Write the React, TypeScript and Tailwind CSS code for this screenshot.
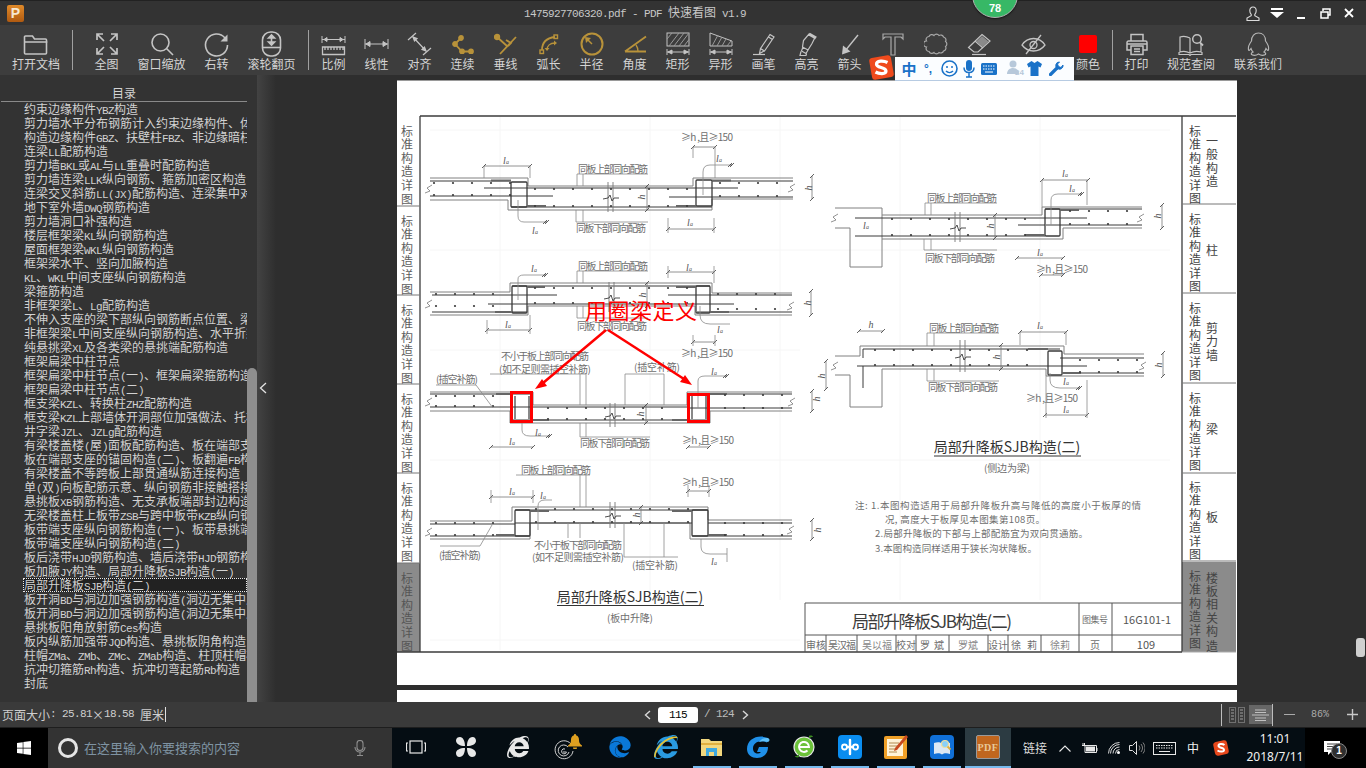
import type { ReactNode } from "react";
import { FaEdge, FaInternetExplorer, FaWindows } from "react-icons/fa";

const GOLD = "#b8923a";
const LINE = "#c4c4c4";

/* half-width runs of the old UI font: latin is squeezed so each char is 6px wide */
function Mixed({ text }: { text: string }) {
  return (
    <>
      {text.split(/([\x20-\x7e]+)/).map((part, i) =>
        /^[\x20-\x7e]+$/.test(part) ? (
          <span key={i} className="font-['Liberation_Mono',monospace] text-[11px] tracking-[-0.6px] whitespace-pre">
            {part}
          </span>
        ) : (
          <span key={i}>{part}</span>
        ),
      )}
    </>
  );
}

const TOC = [
  "约束边缘构件YBZ构造",
  "剪力墙水平分布钢筋计入约束边缘构件、体积配箍率",
  "构造边缘构件GBZ、扶壁柱FBZ、非边缘暗柱构造",
  "连梁LL配筋构造",
  "剪力墙BKL或AL与LL重叠时配筋构造",
  "剪力墙连梁LLK纵向钢筋、箍筋加密区构造",
  "连梁交叉斜筋LL(JX)配筋构造、连梁集中对角斜筋",
  "地下室外墙DWQ钢筋构造",
  "剪力墙洞口补强构造",
  "楼层框架梁KL纵向钢筋构造",
  "屋面框架梁WKL纵向钢筋构造",
  "框架梁水平、竖向加腋构造",
  "KL、WKL中间支座纵向钢筋构造",
  "梁箍筋构造",
  "非框架梁L、Lg配筋构造",
  "不伸入支座的梁下部纵向钢筋断点位置、梁侧构造",
  "非框架梁L中间支座纵向钢筋构造、水平折梁钢筋",
  "纯悬挑梁XL及各类梁的悬挑端配筋构造",
  "框架扁梁中柱节点",
  "框架扁梁中柱节点(一)、框架扁梁箍筋构造",
  "框架扁梁中柱节点(二)",
  "框支梁KZL、转换柱ZHZ配筋构造",
  "框支梁KZL上部墙体开洞部位加强做法、托柱转换",
  "井字梁JZL、JZLg配筋构造",
  "有梁楼盖楼(屋)面板配筋构造、板在端部支座构造",
  "板在端部支座的锚固构造(二)、板翻遍FB构造",
  "有梁楼盖不等跨板上部贯通纵筋连接构造",
  "单(双)向板配筋示意、纵向钢筋非接触搭接构造",
  "悬挑板XB钢筋构造、无支承板端部封边构造",
  "无梁楼盖柱上板带ZSB与跨中板带KZB纵向钢筋构造",
  "板带端支座纵向钢筋构造(一)、板带悬挑端构造",
  "板带端支座纵向钢筋构造(二)",
  "板后浇带HJD钢筋构造、墙后浇带HJD钢筋构造",
  "板加腋JY构造、局部升降板SJB构造(一)",
  "局部升降板SJB构造(二)",
  "板开洞BD与洞边加强钢筋构造(洞边无集中反筋",
  "板开洞BD与洞边加强钢筋构造(洞边无集中反筋",
  "悬挑板阳角放射筋Ces构造",
  "板内纵筋加强带JQD构造、悬挑板阴角构造",
  "柱帽ZMa、ZMb、ZMc、ZMab构造、柱顶柱帽构造",
  "抗冲切箍筋Rh构造、抗冲切弯起筋Rb构造",
  "封底",
];

/* ---------- toolbar icons ---------- */
const Folder = (
  <svg width="26" height="21" viewBox="0 0 26 21" fill="none" stroke={LINE} strokeWidth="1.6">
    <path d="M1.5 19V3a1 1 0 0 1 1-1h7l2 3h11a1 1 0 0 1 1 1v13a1 1 0 0 1-1 1h-20a1 1 0 0 1-1-1zM1.5 8h23" />
  </svg>
);
const FitAll = (
  <svg width="24" height="24" viewBox="0 0 24 24" fill="none" stroke={LINE} strokeWidth="1.7">
    <path d="m15 15 7 7M15 9l7-7M22 16v6h-6M22 8V2h-6M2 16v6h6M2 22l7-7M2 8V2h6M2 2l7 7" />
  </svg>
);
const Zoom = (
  <svg width="24" height="24" viewBox="0 0 24 24" fill="none" stroke={LINE} strokeWidth="1.6">
    <circle cx="10.5" cy="10.5" r="8.5" />
    <path d="m16.5 16.5 6.5 6.5" />
  </svg>
);
const Rotate = (
  <svg width="25" height="25" viewBox="0 0 25 25" fill="none" stroke={LINE} strokeWidth="1.6">
    <path d="M21 6A11 11 0 1 0 23.5 13" />
    <path d="M23.5 2.500v7h-7z" fill={LINE} stroke="none" />
  </svg>
);
const Wheel = (
  <svg width="21" height="26" viewBox="0 0 21 26" fill="none" stroke={LINE} strokeWidth="1.6">
    <rect x="1.500" y="1" width="18" height="24" rx="8" />
    <path d="M1.500 16.500h18" />
    <path d="M10.500 5v8" />
    <path d="m7.500 7 3-3 3 3zM7.500 11l3 3 3-3z" fill={LINE} />
  </svg>
);
const Ratio = (
  <svg width="25" height="21" viewBox="0 0 25 21" fill="none" stroke={LINE} strokeWidth="1" className="mt-[2px]">
    <path d="M1 1v7M24 1v7M1 4.500h23" />
    <path d="m3 4.500 3-2v4zM22 4.500l-3-2v4z" fill={LINE} />
    <path d="M1.500 12h22v7.500h-22zM4 12v3M7 12v3M10 12v3M13 12v3M16 12v3M19 12v3M22 12v3" strokeWidth="1.300" />
  </svg>
);
const Linear = (
  <svg width="25" height="12" viewBox="0 0 25 12" fill="none" stroke={LINE} strokeWidth="1">
    <path d="M1 1v10M24 1v10M1 6h23" />
    <path d="m2 6 4-2.500v5zM23 6l-4-2.500v5z" fill={LINE} />
  </svg>
);
const Align = (
  <svg width="25" height="24" viewBox="0 0 25 24" fill="none" stroke={LINE} strokeWidth="1.200">
    <path d="M1 8 9 1M16 23l8-7M6 5l13 14" />
    <path d="m6 5 4 1.500-2.500 2.500zM19 19l-4-1.500 2.500-2.500z" fill={LINE} />
  </svg>
);
const Chain = (
  <svg width="22" height="19" viewBox="0 0 22 19" fill={GOLD} stroke={GOLD} strokeWidth="1.800">
    <path d="M9 3 3 9l7 7.500h9" fill="none" />
    <circle cx="9" cy="3" r="2" />
    <circle cx="3" cy="9" r="2" />
    <circle cx="10" cy="16.500" r="2" />
    <circle cx="19" cy="16.500" r="2" />
  </svg>
);
const Perp = (
  <svg width="24" height="22" viewBox="0 0 24 22" fill="none" stroke={GOLD} strokeWidth="1.800">
    <path d="M3 4 13 13M22 4 6 21M12 7l5 3-3 3" />
    <circle cx="3" cy="4" r="2.300" fill={GOLD} />
  </svg>
);
const Arc = (
  <svg width="20" height="21" viewBox="0 0 20 21" fill="none" stroke={GOLD} strokeWidth="1.400">
    <path d="M3 16C3 8 8 4 16 3" strokeWidth="1.800" />
    <path d="M8 16c0-4 3-7 8-7" />
    <path d="m15 6.500 3 2.500-3 2.500zM5.500 14l2.500 3 2.500-3z" fill={GOLD} stroke="none" />
    <rect x="1" y="16" width="3.500" height="3.500" />
    <rect x="15" y="1" width="3.500" height="3.500" />
  </svg>
);
const Radius = (
  <svg width="24" height="24" viewBox="0 0 24 24" fill="none" stroke={GOLD} strokeWidth="2">
    <circle cx="12" cy="12" r="10.500" />
    <path d="M12 12 6.500 6.500" strokeWidth="1.500" />
    <path d="m5 5 6 1-5 5z" fill={GOLD} stroke="none" />
  </svg>
);
const Angle = (
  <svg width="24" height="18" viewBox="0 0 24 18" fill="none" stroke={GOLD} strokeWidth="1.800">
    <path d="M2 16.500h21M2 16.500 23 1.500" />
    <path d="M13 10c1.500 2 2 4 2 6.500" strokeWidth="1.300" />
  </svg>
);
const Rect = (
  <svg width="24" height="24" viewBox="0 0 24 24" fill="none" stroke={LINE} strokeWidth="1">
    <rect x="1" y="1" width="22" height="13" />
    <path d="m3 14 10-13M8 14 18 1M13 14 23 1M1 7l5-6M18 14l5-6.500" stroke="#9a9a9a" />
    <path d="M1 17v6M23 17v6M1 20h22" />
    <path d="m2 20 4-2v4zM22 20l-4-2v4z" fill={LINE} />
  </svg>
);
const Shape = (
  <svg width="24" height="24" viewBox="0 0 24 24" fill="none" stroke={LINE} strokeWidth="1">
    <path d="M1 1 23 9v5H1z" />
    <path d="m3 14 6-11M8 14l5-9M13 14l4-7M18 14l4-5" stroke="#9a9a9a" />
    <path d="M1 17v6M23 17v6M1 20h22" />
    <path d="m2 20 4-2v4zM22 20l-4-2v4z" fill={LINE} />
  </svg>
);
const Pen = (
  <svg width="24" height="23" viewBox="0 0 24 23" fill="none" stroke={LINE} strokeWidth="1.200">
    <path d="m18 1.500 4 2.500L12.500 18l-4-2.500zM8.500 15.500l-1 5 4.500-2.500M16.500 4l4 2.500" />
    <path d="M1 21.500h12" />
  </svg>
);
const Marker = (
  <svg width="20" height="25" viewBox="0 0 20 25" fill="none" stroke={LINE} strokeWidth="1.200">
    <path d="m12 2 6 3.500-3 6L11 18l-5.500-3 1-6.500zM13 1.500l6 3.500-1 1.500-6-3.500zM6 15l-1.500 4 4.500 2.500L11 18" />
    <path d="M4 19.500 3 23.500h6l.5-2" />
  </svg>
);
const Arrow = (
  <svg width="18" height="21" viewBox="0 0 18 21" fill="none" stroke={LINE} strokeWidth="1.400">
    <path d="M17 1 4 17" />
    <path d="m1 20.500 1-9 7.500 6z" fill={LINE} stroke="none" />
  </svg>
);
const TextTool = (
  <svg width="22" height="23" viewBox="0 0 22 23" fill="none" stroke="#a8a8a8" strokeWidth="1.200">
    <path d="M1 1h20v5l-2-2h-6v18H9V4H3L1 6z" />
  </svg>
);
const Cloud = (
  <svg width="24" height="23" viewBox="0 0 24 23" fill="none" stroke="#a8a8a8" strokeWidth="1.200">
    <path d="M5 3.500a3 3 0 0 1 5-1 3 3 0 0 1 5 0 3 3 0 0 1 4.500 1.500 3 3 0 0 1 2 4.500 3 3 0 0 1 0 5 3 3 0 0 1-2 4.500 3 3 0 0 1-4.500 1.500 3 3 0 0 1-5 0 3 3 0 0 1-5-1 3 3 0 0 1-2.500-4.500 3 3 0 0 1 0-6A3 3 0 0 1 5 3.500z" />
  </svg>
);
const Eraser = (
  <svg width="24" height="23" viewBox="0 0 24 23" fill="none" stroke={LINE} strokeWidth="1.200">
    <path d="M15 1.500 23 8 11 19H7L1.500 14.500z" />
    <path d="m8 8 8 7" />
    <path d="M15 3 21.500 8.500 15.500 14 9 8.500z" fill="#8a8a8a" stroke="none" />
    <path d="M5 21.500h14" />
  </svg>
);
const EyeOff = (
  <svg width="25" height="21" viewBox="0 0 25 21" fill="none" stroke={LINE} strokeWidth="1.300">
    <path d="M1 11c3-4.500 7-6.500 11.500-6.500S21 6.500 24 11c-3 4-7 6-11.500 6S4 15 1 11z" />
    <circle cx="12.500" cy="11" r="3.500" />
    <path d="M20 1 5 20" />
  </svg>
);
const Printer = (
  <svg width="22" height="23" viewBox="0 0 22 23" fill="none" stroke={LINE} strokeWidth="1.500">
    <path d="M5 8V1.500h12V8M5 17H1V9.500A1.500 1.500 0 0 1 2.500 8h17A1.500 1.500 0 0 1 21 9.500V17h-4" />
    <path d="M5 13h12v8.500H5zM8 16h6M8 18.500h6M1 11h20" />
  </svg>
);
const Book = (
  <svg width="26" height="23" viewBox="0 0 26 23" fill="none" stroke={LINE} strokeWidth="1.200">
    <path d="M12 5C9 3.500 5 3 2 4v15c3-1 7-.5 10 1 3-1.500 7-2 11-1V11M12 5v15M1 19v2.500h10l1 1 1-1h11V19" />
    <circle cx="19" cy="6" r="4.300" strokeWidth="1.500" />
    <path d="m22 9.500 3 3" strokeWidth="1.800" />
  </svg>
);
const QQ = (
  <svg width="23" height="25" viewBox="0 0 23 25" fill="none" stroke="#b4b4b4" strokeWidth="1.200">
    <path d="M4.500 9c0-5 3-8 7-8s7 3 7 8c2 2.500 3.500 6 3 9-.2 1-1.500 0-2.500-1.500-.5 1.500-1 2.500-2 3.500 1.500.7 2 1.500 1.500 2.500-2 1-5 .8-7-.5-2 1.300-5 1.500-7 .5-.5-1 0-1.800 1.500-2.500-1-1-1.500-2-2-3.500-1 1.500-2.300 2.500-2.500 1.500-.5-3 1-6.500 3-9z" />
  </svg>
);
const Swatch = <span className="block w-[18px] h-[18px] rounded-[2px] bg-[#ff0000]" />;

type Tool = { label?: string; icon: ReactNode; w: string };

const GROUP_VIEW: Tool[] = [
  { label: "全图", icon: FitAll, w: "w-[55px]" },
  { label: "窗口缩放", icon: Zoom, w: "w-[55px]" },
  { label: "右转", icon: Rotate, w: "w-[55px]" },
  { label: "滚轮翻页", icon: Wheel, w: "w-[55px]" },
];
const GROUP_MEASURE: Tool[] = [
  { label: "比例", icon: Ratio, w: "w-[43px]" },
  { label: "线性", icon: Linear, w: "w-[43px]" },
  { label: "对齐", icon: Align, w: "w-[43px]" },
  { label: "连续", icon: Chain, w: "w-[43px]" },
  { label: "垂线", icon: Perp, w: "w-[43px]" },
  { label: "弧长", icon: Arc, w: "w-[43px]" },
  { label: "半径", icon: Radius, w: "w-[43px]" },
  { label: "角度", icon: Angle, w: "w-[43px]" },
  { label: "矩形", icon: Rect, w: "w-[43px]" },
  { label: "异形", icon: Shape, w: "w-[43px]" },
  { label: "画笔", icon: Pen, w: "w-[43px]" },
  { label: "高亮", icon: Marker, w: "w-[43px]" },
  { label: "箭头", icon: Arrow, w: "w-[43px]" },
  { icon: TextTool, w: "w-[43px]" },
  { icon: Cloud, w: "w-[43px]" },
  { icon: Eraser, w: "w-[43px]" },
];

function ToolItem({ tool }: { tool: Tool }) {
  return (
    <div className={`${tool.w} shrink-0 flex flex-col items-center`}>
      <div className="h-[32px] w-full flex items-center justify-center pt-[6px]">{tool.icon}</div>
      <div className="h-[14px] text-[12px] leading-[14px] text-[#d4d4d4] whitespace-nowrap">{tool.label}</div>
    </div>
  );
}

const Sep = () => <div className="w-px h-[40px] self-center bg-[#a0a0a0] shrink-0" />;

function Toolbar() {
  return (
    <div className="h-[50px] bg-[#3d3d3d] flex items-start shrink-0">
      <ToolItem tool={{ label: "打开文档", icon: Folder, w: "w-[72px]" }} />
      <Sep />
      <div className="w-[6px] shrink-0" />
      {GROUP_VIEW.map((t) => (
        <ToolItem key={t.label} tool={t} />
      ))}
      <div className="w-[9px] shrink-0" />
      <Sep />
      <div className="w-[3px] shrink-0" />
      {GROUP_MEASURE.map((t, i) => (
        <ToolItem key={i} tool={t} />
      ))}
      <div className="w-[5px] shrink-0" />
      <ToolItem tool={{ icon: EyeOff, w: "w-[56px]" }} />
      <div className="w-[3px] shrink-0" />
      <ToolItem tool={{ label: "颜色", icon: Swatch, w: "w-[48px]" }} />
      <Sep />
      <ToolItem tool={{ label: "打印", icon: Printer, w: "w-[47px]" }} />
      <ToolItem tool={{ label: "规范查阅", icon: Book, w: "w-[62px]" }} />
      <ToolItem tool={{ label: "联系我们", icon: QQ, w: "w-[72px]" }} />
    </div>
  );
}

function TitleBar() {
  return (
    <div className="h-[25px] bg-[#333333] border-t border-[#222222] flex items-center shrink-0 relative">
      <div className="w-[17px] h-[17px] ml-[7px] rounded-[2px] bg-gradient-to-b from-[#e08a2a] to-[#b05a10] flex items-center justify-center text-[14px] leading-none font-bold text-[#f6e7d2] font-['Liberation_Sans',sans-serif]">
        P
      </div>
      <div className="flex-1 pl-[500px] text-[12px] text-[#c8c8c8] whitespace-nowrap">
        <Mixed text="1475927706320.pdf - PDF 快速看图 v1.9" />
      </div>
      <div className="flex items-center pr-[5px]">
        <div className="w-[24px] flex justify-center">
          <svg width="14" height="15" viewBox="0 0 14 15" fill="none" stroke="#dcdcdc" strokeWidth="1.100">
            <path d="M7 1C4.800 1 3.800 2.800 3.800 4.800c0 1.500.6 2.700 1.400 3.500v1.400L1 12v2.500h12V12L8.800 9.700V8.300c.8-.8 1.400-2 1.400-3.500C10.200 2.800 9.200 1 7 1z" />
          </svg>
        </div>
        <div className="w-[24px] flex justify-center">
          <svg width="14" height="11" viewBox="0 0 14 11" fill="#ffffff">
            <path d="M1 0h12v2H1zM0 4h14l-7 6z" />
          </svg>
        </div>
        <div className="w-[24px] flex justify-center items-end h-[14px]">
          <span className="block w-[8px] h-[2px] bg-white mb-[1px]" />
        </div>
        <div className="w-[24px] flex justify-center">
          <svg width="11" height="11" viewBox="0 0 11 11" fill="none" stroke="#ffffff" strokeWidth="1.500">
            <path d="M3 3V1h7v6H8M1 4h7v6H1z" />
          </svg>
        </div>
        <div className="w-[24px] flex justify-center">
          <svg width="10" height="10" viewBox="0 0 10 10" fill="none" stroke="#ffffff" strokeWidth="1.800">
            <path d="m1 1 8 8M9 1 1 9" />
          </svg>
        </div>
      </div>
    </div>
  );
}

function Sidebar() {
  return (
    <div className="w-[257px] h-full bg-[#333333] flex shrink-0 relative">
      <div className="w-[247px] h-full overflow-hidden">
        <div className="h-[27px] ml-px border-b border-[#8a8a8a] text-center text-[12px] leading-[36px] text-[#d4d4d4] box-border">
          目录
        </div>
        {TOC.map((row, i) => (
          <div
            key={i}
            className={`h-[14px] ml-[23px] pl-px text-[12px] leading-[14px] text-[#d2d2d2] whitespace-nowrap overflow-hidden outline-offset-[-1px] ${
              i === 34 ? "bg-[#222222] outline-1 outline-dotted outline-[#e8e8e8]" : ""
            }`}
          >
            <Mixed text={row} />
          </div>
        ))}
      </div>
      <div className="absolute left-[247px] top-[293px] w-[10px] h-[334px] rounded-t-[5px] bg-[#8e8e8e]" />
    </div>
  );
}

function Splitter() {
  return (
    <div className="w-[19px] h-full shrink-0 bg-gradient-to-r from-[#434343] to-[#2e2e2e] flex items-center justify-center pb-[255px] pt-0">
      <svg width="8" height="12" viewBox="0 0 8 12" fill="none" stroke="#e4e4e4" strokeWidth="1.300" className="mt-[254px] -ml-[7px]">
        <path d="M7 1 1.500 6 7 11" />
      </svg>
    </div>
  );
}

/* ---------- the drawing on the PDF page, in screen coordinates ---------- */
const INK = "#3a3a3a";
const SOFT = "#808080";
const TXT = "#6e6e6e";

function Txt({
  x,
  y,
  s = 10,
  c = TXT,
  len,
  a = "middle",
  w,
  children,
}: {
  x: number;
  y: number;
  s?: number;
  c?: string;
  len?: number;
  a?: "middle" | "start";
  w?: number;
  children: string;
}) {
  return (
    <text
      x={x}
      y={y}
      fontSize={s}
      fill={c}
      fontWeight={w}
      textAnchor={a}
      dominantBaseline="central"
      textLength={len}
      lengthAdjust={len ? "spacing" : undefined}
    >
      {children}
    </text>
  );
}

function La({ x, y }: { x: number; y: number }) {
  return (
    <text x={x} y={y} fontSize="10" fill="#555" textAnchor="middle" dominantBaseline="central" fontFamily="'Liberation Serif', serif" fontStyle="italic">
      l<tspan fontSize="6" dy="2">a</tspan>
    </text>
  );
}

function H({ x, y, r }: { x: number; y: number; r?: boolean }) {
  return (
    <text
      x={x}
      y={y}
      fontSize="10"
      fill="#555"
      textAnchor="middle"
      dominantBaseline="central"
      fontFamily="'Liberation Serif', serif"
      fontStyle="italic"
      transform={r ? `rotate(-90 ${x} ${y})` : undefined}
    >
      h
    </text>
  );
}

/* dimension line with slashed ends */
function Dim({ x1, y1, x2, y2 }: { x1: number; y1: number; x2: number; y2: number }) {
  return (
    <g stroke={INK} strokeWidth="0.800" fill="none">
      <path d={`M${x1} ${y1}L${x2} ${y2}`} stroke="#777" />
      <path d={`M${x1 - 2} ${y1 + 2}l4 -4M${x2 - 2} ${y2 + 2}l4 -4`} />
    </g>
  );
}

function Dots({ y, from, to, step = 19 }: { y: number; from: number; to: number; step?: number }) {
  const xs: number[] = [];
  for (let x = from; x <= to; x += step) xs.push(x);
  return (
    <g fill={INK}>
      {xs.map((x) => (
        <circle key={x} cx={x} cy={y} r="1.100" />
      ))}
    </g>
  );
}

function Break({ x, y1, y2 }: { x: number; y1: number; y2: number }) {
  const m = (y1 + y2) / 2;
  return (
    <g fill="none" stroke="#777" strokeWidth="0.900">
      <path d={`M${x} ${y1}V${y2}M${x + 5} ${y1}V${y2}`} />
      <path d={`M${x - 5} ${m + 2}l5 -1 2 -3 2 6 2 -3h5`} stroke={INK} />
    </g>
  );
}

const Zig = ({ x, y }: { x: number; y: number }) => (
  <path d={`M${x - 5} ${y + 4}l5 -2 -3 -3 5 -3`} fill="none" stroke="#777" strokeWidth="0.800" />
);

function Leader({ d }: { d: string }) {
  return <path d={d} fill="none" stroke="#8a8a8a" strokeWidth="0.800" />;
}

function Beams() {
  return (
    <g>
      {/* detail 1 */}
      <g fill="none" stroke={SOFT} strokeWidth="1">
        <path d="M430 178H528V186H693V178H793M430 200H508V210H712V199H793" />
      </g>
      <g fill="none" stroke={INK} strokeWidth="1">
        <path d="M430 181H511M484 188H738M430 196H553M511 207H712M669 197H793M712 181H793" />
        <rect x="511" y="182" width="16" height="25" rx="1" strokeWidth="1.300" />
        <rect x="696" y="180" width="16" height="26" rx="1" strokeWidth="1.300" />
        <path d="M491 180.500H511M527 206H546M676 206H696M712 180.500H731" stroke="#666" strokeWidth="2" />
      </g>
      <Dots y={183} from={434} to={510} />
      <Dots y={195} from={434} to={510} />
      <Dots y={189} from={535} to={690} />
      <Dots y={206} from={535} to={690} />
      <Dots y={183} from={720} to={790} />
      <Dots y={196} from={720} to={790} />
      <Break x={608} y1={182} y2={212} />
      <Zig x={430} y={189} />
      <Zig x={793} y={188} />
      <Txt x={613} y={168} len={70}>同板上部同向配筋</Txt>
      <Txt x={611} y={227} len={70}>同板下部同向配筋</Txt>
      <Leader d="M577 174H648M577 174V186M583 174V186M576 210V222H648M583 210V222" />
      <La x={506} y={160} />
      <Dim x1={484} y1={166} x2={530} y2={166} />
      <Leader d="M484 166V178M530 166V178" />
      <Txt x={707} y={136} len={52}>≥h ,且≥150</Txt>
      <Dim x1={693} y1={147} x2={715} y2={147} />
      <Leader d="M693 147V158M715 147V178" />
      <La x={719} y={158} />
      <Leader d="M703 195V172Q703 165 710 165H732M518 200V216Q518 222 524 222H547" />
      <Dim x1={730} y1={165} x2={732} y2={165} />
      <Dim x1={545} y1={222} x2={547} y2={222} />
      <La x={535} y={230} />
      <Dim x1={668} y1={229} x2={714} y2={229} />
      <Leader d="M668 218V233M714 218V233" />
      <La x={690} y={222} />
      <Dim x1={812} y1={176} x2={812} y2={199} />
      <H x={808} y={188} r />
      <Dim x1={647} y1={186} x2={647} y2={210} />
      <H x={641} y={197} r />

      {/* detail 2 */}
      <g fill="none" stroke={SOFT} strokeWidth="1">
        <path d="M430 292H510V283H712V293H792M430 315H528V306H695V315H792" />
      </g>
      <g fill="none" stroke={INK} strokeWidth="1">
        <path d="M432 295H557M668 295H792M488 304H734M432 312H527M697 312H792M512 286H710" />
        <rect x="512" y="286" width="15" height="27" rx="1" strokeWidth="1.300" />
        <rect x="696" y="286" width="14" height="27" rx="1" strokeWidth="1.300" />
        <path d="M527 287H545M676 287H696M495 312H512M710 312H729" stroke="#666" strokeWidth="2" />
      </g>
      <Dots y={294} from={436} to={510} />
      <Dots y={306} from={436} to={510} />
      <Dots y={288} from={535} to={690} />
      <Dots y={303} from={535} to={690} />
      <Dots y={294} from={718} to={790} />
      <Dots y={309} from={718} to={790} />
      <Break x={609} y1={282} y2={312} />
      <Zig x={430} y={304} />
      <Zig x={792} y={306} />
      <Txt x={613} y={265} len={70}>同板上部同向配筋</Txt>
      <Txt x={612} y={325} len={70}>同板下部同向配筋</Txt>
      <Leader d="M577 271H648M577 271V283M583 271V283M577 306V318H648M583 306V318" />
      <La x={534} y={268} />
      <Leader d="M518 300V279Q518 275 524 275H546" />
      <Dim x1={544} y1={275} x2={546} y2={275} />
      <La x={689} y={267} />
      <Dim x1={668} y1={272} x2={714} y2={272} />
      <Leader d="M668 266V278M714 266V283" />
      <La x={508} y={324} />
      <Dim x1={487} y1={330} x2={530} y2={330} />
      <Leader d="M487 320V334M530 315V334" />
      <Leader d="M700 306V315Q700 324 710 324H730" />
      <La x={720} y={329} />
      <Dim x1={693} y1={342} x2={715} y2={342} />
      <Leader d="M693 335V346M715 335V346" />
      <Txt x={707} y={352} len={52}>≥h ,且≥150</Txt>
      <Dim x1={811} y1={291} x2={811} y2={315} />
      <H x={807} y={303} r />
      <Dim x1={647} y1={283} x2={647} y2={306} />
      <H x={642} y={295} r />

      {/* detail 3 */}
      <g fill="none" stroke={SOFT} strokeWidth="1">
        <path d="M430 392H533V405H687V392H792M430 411H510V423H710V411H792" />
      </g>
      <g fill="none" stroke={INK} strokeWidth="1">
        <path d="M430 394H533M430 407H533M533 407H687M510 420H710M687 394H792M687 408H792" />
        <path d="M515 396V419M529 396V419M692 396V419M706 396V419" strokeWidth="1.200" />
        <path d="M496 394H512M533 420H549M672 420H688M708 394H727" stroke="#666" strokeWidth="2" />
      </g>
      <Dots y={396} from={436} to={505} />
      <Dots y={406} from={436} to={505} />
      <Dots y={408} from={548} to={680} />
      <Dots y={419} from={548} to={680} />
      <Dots y={395} from={725} to={790} />
      <Dots y={408} from={725} to={790} />
      <Break x={610} y1={403} y2={427} />
      <Zig x={430} y={402} />
      <Zig x={793} y={402} />
      <Txt x={545} y={355} len={88}>不小于板上部同向配筋</Txt>
      <Txt x={545} y={368} len={92}>(如不足则需插空补筋)</Txt>
      <Leader d="M490 374H586M586 374V405M580 374V405M625 374H664M625 374V405M664 374V405" />
      <Txt x={457} y={378} len={42}>(插空补筋)</Txt>
      <Txt x={657} y={366} len={46}>(插空补筋)</Txt>
      <Leader d="M436 385H476L493 408" />
      <Leader d="M698 408V381Q698 376 705 376H727" />
      <La x={714} y={371} />
      <Dim x1={725} y1={376} x2={727} y2={376} />
      <Dim x1={491} y1={447} x2={533} y2={447} />
      <La x={512} y={441} />
      <Leader d="M522 423V430Q522 436 530 436H550" />
      <Dim x1={548} y1={436} x2={550} y2={436} />
      <La x={538} y={432} />
      <Txt x={615} y={442} len={70}>同板下部同向配筋</Txt>
      <Leader d="M580 423V437H650M586 423V437" />
      <Txt x={708} y={439} len={52}>≥h ,且≥150</Txt>
      <Dim x1={688} y1={447} x2={709} y2={447} />
      <Dim x1={812} y1={391} x2={812} y2={411} />
      <H x={816} y={399} r />
      <Dim x1={646} y1={405} x2={646} y2={423} />
      <H x={640} y={414} r />

      {/* detail 4 */}
      <g fill="none" stroke={SOFT} strokeWidth="1">
        <path d="M430 521H512V507H708V520H792M430 539H530V523H690V539H792" />
      </g>
      <g fill="none" stroke={INK} strokeWidth="1">
        <path d="M430 524H515M430 536H530M692 536H792M708 523H792M515 510H708M515 523H692" />
        <rect x="515" y="510" width="15" height="26" rx="1" strokeWidth="1.300" />
        <rect x="692" y="510" width="16" height="26" rx="1" strokeWidth="1.300" />
        <path d="M530 511H549M672 511H692M496 535H515M708 535H727" stroke="#666" strokeWidth="2" />
      </g>
      <Dots y={523} from={436} to={510} />
      <Dots y={535} from={436} to={510} />
      <Dots y={509} from={536} to={690} />
      <Dots y={522} from={536} to={690} />
      <Dots y={523} from={725} to={790} />
      <Dots y={535} from={725} to={790} />
      <Break x={610} y1={502} y2={528} />
      <Zig x={430} y={532} />
      <Zig x={792} y={530} />
      <Txt x={556} y={469} len={70}>同板上部同向配筋</Txt>
      <Leader d="M516 475H590M580 475V507M586 475V507" />
      <Txt x={578} y={544} len={88}>不小于板下部同向配筋</Txt>
      <Txt x={578} y={556} len={92}>(如不足则需插空补筋)</Txt>
      <Leader d="M568 523V538M580 523V538M624 523V557H678M664 523V557" />
      <Txt x={460} y={554} len={42}>(插空补筋)</Txt>
      <Txt x={655} y={564} len={46}>(插空补筋)</Txt>
      <Leader d="M492 525 480 546H440" />
      <Dim x1={491} y1={497} x2={533} y2={497} />
      <Leader d="M491 490V503M533 490V503" />
      <La x={512} y={491} />
      <Leader d="M538 530V506Q538 500 545 500H552" />
      <La x={543} y={495} />
      <Txt x={708} y={481} len={52}>≥h ,且≥150</Txt>
      <Dim x1={688} y1={491} x2={709} y2={491} />
      <Leader d="M688 485V497M709 485V497" />
      <Leader d="M701 539V547Q701 554 710 554H727" />
      <La x={714} y={561} />
      <Leader d="M727 548V562" />
      <Dim x1={812} y1={520} x2={812} y2={539} />
      <H x={817} y={530} r />
      <Dim x1={641} y1={507} x2={641} y2={523} />
      <H x={636} y={515} r />
      <Txt x={630} y={596} s={14} c="#333">局部升降板SJB构造(二)</Txt>
      <path d="M557 605.500H704" stroke="#333" strokeWidth="1" />
      <Txt x={630} y={617} len={46}>(板中升降)</Txt>

      {/* detail 5 */}
      <g fill="none" stroke={SOFT} strokeWidth="1">
        <path d="M835 208H882V267H850V228H835M882 215H1042V207H1142M882 239H1063V228H1142" />
      </g>
      <g fill="none" stroke={INK} strokeWidth="1">
        <path d="M855 218H1087M855 236H1045M1045 209H1142M1046 225H1142M1018 225H1045" />
        <rect x="1045" y="209" width="15" height="27" rx="1" strokeWidth="1.300" />
        <path d="M1060 210H1079M1025 235H1045" stroke="#666" strokeWidth="2" />
      </g>
      <Dots y={219} from={892} to={1030} />
      <Dots y={235} from={892} to={1030} />
      <Dots y={211} from={1070} to={1140} />
      <Dots y={224} from={1070} to={1140} />
      <Break x={955} y1={212} y2={242} />
      <Zig x={836} y={218} />
      <Zig x={1142} y={218} />
      <La x={866} y={225} />
      <Txt x={962} y={197} len={70}>同板上部同向配筋</Txt>
      <Txt x={960} y={257} len={70}>同板下部同向配筋</Txt>
      <Leader d="M925 203H997M925 203V215M931 203V215M924 239V250H997M931 239V250" />
      <La x={1065} y={173} />
      <Dim x1={1042} y1={180} x2={1088} y2={180} />
      <Leader d="M1042 180V207M1087 180V205" />
      <Leader d="M1051 225V200Q1051 194 1058 194H1082" />
      <Dim x1={1080} y1={194} x2={1082} y2={194} />
      <La x={1072} y={188} />
      <La x={1040} y={252} />
      <Dim x1={1017} y1={258} x2={1063} y2={258} />
      <Txt x={1062} y={268} len={52}>≥h ,且≥150</Txt>
      <Dim x1={1041} y1={275} x2={1063} y2={275} />
      <Dim x1={1162} y1={205} x2={1162} y2={228} />
      <H x={1157} y={216} r />
      <Dim x1={995} y1={215} x2={995} y2={238} />
      <H x={990} y={226} r />

      {/* detail 6 */}
      <g fill="none" stroke={SOFT} strokeWidth="1">
        <path d="M835 356H860V346H1064V354H1144M835 375H850V407H882V369H1046V376H1144" />
      </g>
      <g fill="none" stroke={INK} strokeWidth="1">
        <path d="M863 349H1060M863 349V358M857 366H1087M863 366V388M1060 358H1144M1064 373H1144" />
        <rect x="1048" y="351" width="14" height="24" rx="1" strokeWidth="1.300" />
        <path d="M1028 349H1048M1062 373H1081" stroke="#666" strokeWidth="2" />
      </g>
      <Dots y={350} from={875} to={1030} />
      <Dots y={365} from={875} to={1030} />
      <Dots y={360} from={1080} to={1140} />
      <Dots y={372} from={1080} to={1140} />
      <Break x={960} y1={340} y2={372} />
      <Zig x={836} y={366} />
      <Zig x={1144} y={366} />
      <Txt x={964} y={327} len={70}>同板上部同向配筋</Txt>
      <Txt x={963} y={386} len={70}>同板下部同向配筋</Txt>
      <Leader d="M927 333H999M927 333V346M934 333V346M927 369V381H999M934 369V381" />
      <Dim x1={859} y1={331} x2={883} y2={331} />
      <H x={871} y={324} />
      <La x={1040} y={325} />
      <Dim x1={1020} y1={332} x2={1066} y2={332} />
      <Leader d="M1020 332V345M1066 332V345" />
      <Dim x1={826} y1={361} x2={826} y2={389} />
      <H x={821} y={376} r />
      <Leader d="M1050 373V380Q1050 388 1060 388H1080" />
      <Dim x1={1078} y1={388} x2={1080} y2={388} />
      <La x={1066} y={381} />
      <Txt x={1052} y={397} len={52}>≥h ,且≥150</Txt>
      <Dim x1={1045} y1={415} x2={1087} y2={415} />
      <Leader d="M1046 376V418M1087 380V418" />
      <La x={1066} y={409} />
      <Dim x1={1163} y1={353} x2={1163} y2={376} />
      <H x={1158} y={365} r />
      <Dim x1={1001} y1={345} x2={1001} y2={369} />
      <H x={996} y={357} r />
      <Txt x={1007} y={446} s={14} c="#333">局部升降板SJB构造(二)</Txt>
      <path d="M934 456H1081" stroke="#333" strokeWidth="1" />
      <Txt x={1007} y={467} len={46}>(侧边为梁)</Txt>

      {/* notes */}
      <Txt x={855} y={505} a="start" s={9.500} len={286}>注: 1.本图构造适用于局部升降板升高与降低的高度小于板厚的情</Txt>
      <Txt x={885} y={519} a="start" s={9.500} len={160}>况, 高度大于板厚见本图集第108页。</Txt>
      <Txt x={875} y={533} a="start" s={9.500} len={213}>2.局部升降板的下部与上部配筋宜为双向贯通筋。</Txt>
      <Txt x={875} y={548} a="start" s={9.500} len={162}>3.本图构造同样适用于狭长沟状降板。</Txt>
    </g>
  );
}

function Annotations() {
  return (
    <g>
      <g stroke="#ff0000" fill="#ff0000">
        <path d="M606 330 543 383" strokeWidth="2.500" fill="none" />
        <path d="m535 389 12-3-5-7z" stroke="none" />
        <path d="M608 330 684 379" strokeWidth="2.500" fill="none" />
        <path d="m692 385-7-10-5 7z" stroke="none" />
      </g>
      <rect x="511.500" y="392.500" width="20" height="29" fill="none" stroke="#ff0000" strokeWidth="3" />
      <rect x="688.500" y="394.500" width="20" height="27" fill="none" stroke="#ff0000" strokeWidth="3" />
      <Txt x={585} y={309} a="start" s={22} c="#ff0000" len={112}>用圈梁定义</Txt>
    </g>
  );
}

const LEFT_Y = [116, 206, 295, 384, 473, 563];
const SIDE = ["标", "准", "构", "造", "详", "图"];

function Strips() {
  return (
    <g>
      {/* frame and margins */}
      <rect x="397" y="563" width="23" height="89" fill="#8b8b8b" />
      <rect x="1182" y="562" width="54" height="90" fill="#8b8b8b" />
      <path d="M420 116H1236M420 116V652M397 652H1182M1182 116V652" fill="none" stroke="#3c3c3c" strokeWidth="1.300" />
      <path d="M397 206H420M397 295H420M397 384H420M397 473H420M397 563H420" stroke="#777" />
      <path d="M1182 204H1236M1182 293H1236M1182 383H1236M1182 473H1236M1182 561H1236" stroke="#777" />
      <path d="M1182 652H1236" stroke="#aaa" />
      {LEFT_Y.map((top, cell) =>
        SIDE.map((ch, i) => (
          <Txt key={`${cell}-${i}`} x={407} y={top + 14 + i * 13.6} s={12} c={cell === 5 ? "#555" : "#5e5e5e"}>
            {ch}
          </Txt>
        )),
      )}
      {[116, 204, 293, 383, 472, 561].map((top, cell) =>
        SIDE.map((ch, i) => (
          <Txt key={`r${cell}-${i}`} x={1195} y={top + 14 + i * 13.5} s={12} c="#444">
            {ch}
          </Txt>
        )),
      )}
      <Txt x={1212} y={140} s={12} c="#444">一</Txt>
      <Txt x={1212} y={153} s={12} c="#444">般</Txt>
      <Txt x={1212} y={167} s={12} c="#444">构</Txt>
      <Txt x={1212} y={180} s={12} c="#444">造</Txt>
      <Txt x={1212} y={249} s={12} c="#444">柱</Txt>
      <Txt x={1212} y={327} s={12} c="#444">剪</Txt>
      <Txt x={1212} y={340} s={12} c="#444">力</Txt>
      <Txt x={1212} y={354} s={12} c="#444">墙</Txt>
      <Txt x={1212} y={428} s={12} c="#444">梁</Txt>
      <Txt x={1212} y={516} s={12} c="#444">板</Txt>
      <Txt x={1212} y={577} s={12} c="#444">楼</Txt>
      <Txt x={1212} y={590} s={12} c="#444">板</Txt>
      <Txt x={1212} y={603} s={12} c="#444">相</Txt>
      <Txt x={1212} y={617} s={12} c="#444">关</Txt>
      <Txt x={1212} y={630} s={12} c="#444">构</Txt>
      <Txt x={1212} y={645} s={12} c="#444">造</Txt>

      {/* title block */}
      <path
        d="M805 603H1182M805 603V652M805 635H1182M1079 603V652M1112 603V652M826 635V652M857 635V652M896 635V652M916 635V652M949 635V652M988 635V652M1008 635V652M1041 635V652"
        fill="none"
        stroke="#555"
        strokeWidth="1"
      />
      <Txt x={932} y={620} s={17} c="#3c3c3c" len={160}>局部升降板SJB构造(二)</Txt>
      <Txt x={1095} y={619} s={9} len={26}>图集号</Txt>
      <Txt x={1147} y={619} s={11} c="#555">16G101-1</Txt>
      <Txt x={816} y={644} s={10} len={20}>审核</Txt>
      <Txt x={842} y={644} s={10} len={28}>吴汉福</Txt>
      <Txt x={877} y={644} s={10} c="#888" len={30}>吴以福</Txt>
      <Txt x={906} y={644} s={10} len={20}>校对</Txt>
      <Txt x={932} y={644} s={10} len={24}>罗 斌</Txt>
      <Txt x={968} y={644} s={10} c="#888" len={20}>罗斌</Txt>
      <Txt x={998} y={644} s={10} len={20}>设计</Txt>
      <Txt x={1024} y={644} s={10} len={26}>徐 莉</Txt>
      <Txt x={1060} y={644} s={10} c="#888" len={20}>徐莉</Txt>
      <Txt x={1095} y={644} s={10}>页</Txt>
      <Txt x={1146} y={644} s={11} c="#555">109</Txt>
    </g>
  );
}

function Page() {
  return (
    <div className="w-[840px] h-[605px] bg-white ml-[121px] mt-[5px] border-t border-[#9a9a9a] shrink-0 overflow-hidden">
      <svg width="840" height="604" viewBox="397 81 840 604" className="block">
        <path
          d="M430 130H1170M430 250H1170M430 350H800M430 460H1170M430 640H800M500 116V650M650 116V600M780 116V600M900 116V600M1040 116V600"
          stroke="#f6f6f6"
          fill="none"
        />
        <Strips />
        <Beams />
        <Annotations />
      </svg>
    </div>
  );
}

function StatusBar() {
  return (
    <div className="h-[26px] bg-[#3a3a3a] border-b border-[#1e1e1e] flex items-center shrink-0 text-[#cfcfcf] text-[12px] relative">
      <div className="w-[644px] pl-[2px] flex items-center whitespace-nowrap shrink-0">
        <Mixed text="页面大小: 25.81" />
        <span>×</span>
        <Mixed text="18.58 厘米" />
        <span className="w-px h-[15px] bg-[#e0e0e0] ml-[1px]" />
      </div>
      <svg width="7" height="10" viewBox="0 0 7 10" fill="none" stroke="#d8d8d8" strokeWidth="1.400" className="shrink-0">
        <path d="M6 1 1.500 5 6 9" />
      </svg>
      <div className="ml-[7px] w-[40px] h-[16px] rounded-[3px] bg-white text-black text-center font-['Liberation_Mono',monospace] text-[11px] tracking-[-0.6px] leading-[16px]">
        115
      </div>
      <div className="ml-[6px] w-[34px] font-['Liberation_Mono',monospace] text-[11px] tracking-[-0.6px] text-[#bcbcbc] whitespace-pre">/ 124</div>
      <svg width="7" height="10" viewBox="0 0 7 10" fill="none" stroke="#d8d8d8" strokeWidth="1.400" className="ml-[4px] shrink-0">
        <path d="M1 1 5.500 5 1 9" />
      </svg>
      <div className="ml-[472px] w-px h-[22px] bg-[#bdbdbd] shrink-0" />
      <svg width="16" height="16" viewBox="0 0 16 16" fill="none" stroke="#707070" className="ml-[7px] shrink-0">
        <rect x="0.500" y="0.500" width="6" height="15" />
        <rect x="9.500" y="0.500" width="6" height="15" />
        <path d="M2 3h3M2 6h3M2 9h3M2 12h3M11 3h3M11 6h3M11 9h3M11 12h3" stroke="#a0a0a0" />
      </svg>
      <div className="ml-[4px] w-[23px] h-[19px] bg-[#666666] flex items-center justify-center shrink-0">
        <svg width="17" height="16" viewBox="0 0 17 16" fill="none" stroke="#c0c0c0">
          <path d="M3 3h11M3 5.500h11M3 11h11M3 13.500h11M0 8h17" />
        </svg>
      </div>
      <div className="w-px h-[22px] bg-[#bdbdbd] shrink-0" />
      <div className="ml-[11px] w-[11px] h-px bg-[#aaaaaa] shrink-0" />
      <div className="ml-[16px] w-[18px] font-['Liberation_Mono',monospace] text-[10px] text-[#aaaaaa]">86%</div>
      <svg width="11" height="11" viewBox="0 0 11 11" stroke="#c8c8c8" strokeWidth="1.400" className="ml-[18px] shrink-0">
        <path d="M0 5.500h11M5.500 0v11" />
      </svg>
    </div>
  );
}

/* ---------- taskbar ---------- */
function Slot({ w, on, active, children }: { w: string; on?: boolean; active?: boolean; children: ReactNode }) {
  return (
    <div className={`${w} h-full shrink-0 flex flex-col ${active ? "bg-[#2c3b42]" : ""}`}>
      <div className="flex-1 flex items-center justify-center">{children}</div>
      <div className={`h-[2px] ${on ? "bg-[#76b9ed]" : ""} ${active ? "" : "mx-[4px]"}`} />
    </div>
  );
}

const Pinwheel = (
  <svg width="22" height="22" viewBox="0 0 22 22" fill="#e8e8e8">
    <path d="M10 10C5 10 1 8 1 4.500 1 2 3 1 5 1c3 0 5 4 5 9zM12 10c0-5 2-9 5.500-9C20 1 21 3 21 5c0 3-4 5-9 5zM12 12c5 0 9 2 9 5.500 0 2.500-2 3.500-4 3.500-3 0-5-4-5-9zM10 12c0 5-2 9-5.500 9C2 21 1 19 1 17c0-3 4-5 9-5z" />
  </svg>
);
const SpiralBell = (
  <div className="relative w-[28px] h-[26px]">
    <svg width="20" height="20" viewBox="0 0 20 20" fill="none" stroke="#d0d0d0" strokeWidth="1" className="absolute left-0 bottom-0">
      <path d="M17 4A9 9 0 1 0 19 11M14 7A5.500 5.500 0 1 0 15 12M11 9a2.500 2.500 0 1 0 1.500 3H9" />
    </svg>
    <svg width="14" height="15" viewBox="0 0 14 15" fill="#e0a020" className="absolute right-0 top-0">
      <path d="M7 0a1 1 0 0 1 1 1.200C10.500 2 11 4 11 6c0 3 1 4 3 5.500V12.500H0v-1C2 10 3 9 3 6c0-2 .5-4 3-4.800A1 1 0 0 1 7 0zM5 13.500h4a2 2 0 0 1-4 0z" />
    </svg>
  </div>
);
const Explorer = (
  <svg width="22" height="20" viewBox="0 0 22 20">
    <path d="M0 2h8l2 2h11v15H0z" fill="#f2d77e" />
    <path d="M0 6h21v2H0z" fill="#e0b040" />
    <path d="M5 11h11v8h-3v-4H8v4H5z" fill="#3fa9e0" />
    <path d="M8 15h5v4H8z" fill="#f2d77e" />
  </svg>
);
const GLogo = (
  <svg width="24" height="24" viewBox="0 0 24 24" fill="none">
    <path d="M22 3C12-1 1 4 1 14c0 6 5 9 10 9 6 0 11-4 11-11h-9l-2 5h4c-1 1-2 1.500-3 1.500-3 0-5-2-5-5 0-6 7-9 14-6z" fill="#1f8fe8" />
    <path d="M22 3c2 1 2 3 0 4-3-1-6-1-9 0 2-3 5-4.500 9-4z" fill="#5fc0f8" />
  </svg>
);
const GreenE = (
  <svg width="22" height="24" viewBox="0 0 22 24">
    <circle cx="11" cy="12" r="10" fill="#6cc23a" stroke="#e8e8e8" strokeWidth="1.200" />
    <path d="M6 12h10a5 5 0 1 0-1.500 3.500" fill="none" stroke="#ffffff" strokeWidth="2" />
    <path d="M16 1c2-1 4 0 4 1-2 0-3 .5-4 2zM6 22c-2 1-4 0-4-1 2 0 3-.5 4-2z" fill="#3a8a20" />
  </svg>
);
const BlueApp = (
  <svg width="24" height="24" viewBox="0 0 24 24">
    <rect width="24" height="24" rx="4" fill="#0a8df0" />
    <path d="M12 5v14M9 12h6" stroke="#ffffff" strokeWidth="2.400" strokeLinecap="round" />
    <circle cx="6.500" cy="12" r="2.500" fill="none" stroke="#ffffff" strokeWidth="1.800" />
    <circle cx="17.500" cy="12" r="2.500" fill="none" stroke="#ffffff" strokeWidth="1.800" />
  </svg>
);
const Notes = (
  <svg width="24" height="24" viewBox="0 0 24 24">
    <rect x="0" y="1" width="23" height="23" rx="2" fill="#f0a028" />
    <rect x="3" y="4" width="16" height="17" fill="#fff3d8" />
    <path d="M5 8h10M5 11h10M5 14h8M5 17h8" stroke="#b08a50" />
    <path d="m22 0 2 2-11 13-3 1 1-3z" fill="#c84a20" />
  </svg>
);
const ReaderApp = (
  <svg width="24" height="24" viewBox="0 0 24 24">
    <rect width="24" height="24" rx="4" fill="#1070d8" />
    <path d="M4 8c3-1 6-1 8 .5 2-1.500 5-1.500 8-.5v11c-3-1-6-1-8 .5-2-1.500-5-1.500-8-.5z" fill="#dce8f4" />
    <circle cx="15" cy="9" r="3.500" fill="#8ad0f8" stroke="#f0e0a0" strokeWidth="1.200" />
    <path d="m17.500 11.500 3 3" stroke="#e0b040" strokeWidth="1.800" />
  </svg>
);
const PdfTile = (
  <div className="w-[24px] h-[24px] rounded-[2px] bg-[#c0661e] border border-[#9a9a9a] flex items-center justify-center font-['Liberation_Serif',serif] text-[10px] font-bold text-[#e8c99a] tracking-[0.5px]">
    PDF
  </div>
);

function Taskbar() {
  return (
    <div className="h-[40px] bg-[#050d13] flex text-[#e6e6e6] shrink-0">
      <div className="w-[48px] bg-black flex items-center justify-center shrink-0">
        <FaWindows size={16} color="#ffffff" />
      </div>
      <div className="w-[344px] bg-[#333333] flex items-center shrink-0">
        <span className="ml-[10px] w-[20px] h-[20px] rounded-full border-[3px] border-[#e4e4e4] shrink-0" />
        <span className="ml-[6px] text-[13px] text-[#7f93a3] whitespace-nowrap">在这里输入你要搜索的内容</span>
        <svg width="12" height="16" viewBox="0 0 12 16" fill="none" stroke="#8e8e8e" strokeWidth="1.100" className="ml-[114px] shrink-0">
          <rect x="3" y="0.500" width="6" height="10" rx="3" />
          <path d="M1 7c0 3 2 5 5 5s5-2 5-5M6 12v3M3 15.500h6" />
        </svg>
      </div>
      <Slot w="w-[48px]">
        <svg width="20" height="14" viewBox="0 0 20 14" fill="none" stroke="#e8e8e8" strokeWidth="1.200">
          <rect x="4" y="1" width="12" height="12" />
          <path d="M2 3H.500v8H2M18 3h1.500v8H18" />
        </svg>
      </Slot>
      <Slot w="w-[52px]">{Pinwheel}</Slot>
      <Slot w="w-[52px]">
        <FaInternetExplorer size={22} color="#e8e8e8" />
      </Slot>
      <Slot w="w-[48px]">{SpiralBell}</Slot>
      <div className="w-[5px] shrink-0" />
      <Slot w="w-[46px]">
        <FaEdge size={22} color="#0a78d8" />
      </Slot>
      <Slot w="w-[46px]">
        <div className="relative">
          <FaInternetExplorer size={24} color="#2a9ae0" />
          <svg width="24" height="24" viewBox="0 0 24 24" fill="none" stroke="#e8c030" strokeWidth="1.600" className="absolute left-0 top-0">
            <path d="M1 22c-1-4 4-12 10-16 5-3 11-5 12-3" />
          </svg>
        </div>
      </Slot>
      <Slot w="w-[46px]" on>{Explorer}</Slot>
      <Slot w="w-[46px]" on>{GLogo}</Slot>
      <Slot w="w-[46px]" on>{GreenE}</Slot>
      <Slot w="w-[46px]" on>{BlueApp}</Slot>
      <Slot w="w-[46px]" on>{Notes}</Slot>
      <Slot w="w-[46px]" on>{ReaderApp}</Slot>
      <Slot w="w-[46px]" on active>{PdfTile}</Slot>
      <div className="flex items-center shrink-0">
        <span className="ml-[12px] w-[24px] text-[12px] text-[#dcdcdc] whitespace-nowrap">链接</span>
        <svg width="12" height="7" viewBox="0 0 12 7" fill="none" stroke="#e8e8e8" strokeWidth="1.100" className="ml-[12px]">
          <path d="m.500 6.500 5.500-5.500 5.500 5.500" />
        </svg>
        <svg width="16" height="11" viewBox="0 0 16 11" fill="none" stroke="#e8e8e8" className="ml-[11px]">
          <path d="M3 2.500h11.500v7H3zM15 5v3" />
          <rect x="4.500" y="4" width="8" height="4" fill="#e8e8e8" />
          <path d="M0 2.500h3M1 0v3M2.500 0v3" />
        </svg>
        <svg width="12" height="12" viewBox="0 0 12 12" fill="none" stroke="#d8d8d8" className="ml-[10px]">
          <path d="M.500 11.500a11 11 0 0 1 11-11M2.500 11.500a9 9 0 0 1 9-9M5 11.500a6.500 6.500 0 0 1 6.500-6.500M7.500 11.500a4 4 0 0 1 4-4" />
          <circle cx="10.500" cy="10.500" r="1.500" fill="#ffffff" stroke="none" />
        </svg>
        <svg width="16" height="14" viewBox="0 0 16 14" fill="none" stroke="#e0e0e0" className="ml-[9px]">
          <path d="M.500 4.500h3l4-4v13l-4-4h-3z" />
          <path d="M10 4.500a4 4 0 0 1 0 5M12 3a6.500 6.500 0 0 1 0 8M14 1.500a9 9 0 0 1 0 11" stroke="#808080" />
        </svg>
        <svg width="23" height="13" viewBox="0 0 23 13" fill="none" stroke="#e8e8e8" className="ml-[8px]">
          <rect x="0.500" y="0.500" width="22" height="12" />
          <path d="M3 3.500h17M3 6h17" strokeDasharray="1.500 1" />
          <path d="M6 9.500h11" />
        </svg>
        <span className="ml-[11px] w-[12px] text-[12px] text-[#f0f0f0]">中</span>
        <svg width="16" height="16" viewBox="0 0 16 16" className="ml-[14px]">
          <rect x="1" y="1" width="14" height="14" rx="3" fill="#e8481c" transform="rotate(-12 8 8)" />
          <path d="M11.500 5c-2-1.500-6-1.500-6 .8 0 2.500 5.500 1.500 5.500 4.200 0 2-4 2-6.500.5" fill="none" stroke="#ffffff" strokeWidth="2" />
        </svg>
        <div className="ml-[16px] w-[60px] flex flex-col items-center font-['Noto_Sans',sans-serif] text-[12px] leading-[18px] text-[#f2f2f2] whitespace-nowrap">
          <span>11:01</span>
          <span>2018/7/11</span>
        </div>
      </div>
      <div className="flex-1 bg-black flex items-center pl-[19px] relative">
        <svg width="16" height="15" viewBox="0 0 16 15" fill="#ffffff">
          <path d="M0 0h16v11H7l-3 3v-3H0z" />
          <path d="M3 3h10M3 5.500h10M3 8h7" stroke="#444" />
        </svg>
        <span className="absolute left-[26px] top-[15px] w-[16px] h-[16px] rounded-full bg-[#2f2f2f] border border-[#888] text-[10px] leading-[14px] font-bold text-center text-white font-['Liberation_Sans',sans-serif]">
          1
        </span>
      </div>
    </div>
  );
}

function SogouBar() {
  return (
    <div className="absolute left-[868px] top-[54px] flex items-end h-[27px]">
      <div className="w-[27px] h-[27px] flex items-center justify-center shrink-0 z-10">
        <svg width="27" height="27" viewBox="0 0 27 27">
          <rect x="2.500" y="2.500" width="22" height="22" rx="3" fill="#ef4a1c" transform="rotate(-10 13.500 13.500)" />
          <path d="M19.500 8.500c-4-2-11-2-11 1.700 0 4 9.500 2.500 9.500 6.800 0 3.500-7 3-10.500 1" fill="none" stroke="#ffffff" strokeWidth="3.200" />
        </svg>
      </div>
      <div className="w-[179px] h-[24px] bg-[#fbfdff] border-b border-[#b7cbe2] flex items-center text-[#1a72c8] shrink-0">
        <span className="ml-[6px] text-[15px] font-bold leading-none w-[16px] text-center">中</span>
        <span className="ml-[7px] w-[12px] text-[12px] font-bold leading-none text-[#1a72c8] whitespace-pre font-['Liberation_Sans',sans-serif]">°,</span>
        <svg width="17" height="17" viewBox="0 0 17 17" fill="none" stroke="#1a72c8" strokeWidth="1.600" className="ml-[5px]">
          <circle cx="8.500" cy="8.500" r="7.500" />
          <circle cx="6" cy="7" r="1" fill="#1a72c8" stroke="none" />
          <circle cx="11" cy="7" r="1" fill="#1a72c8" stroke="none" />
          <path d="M5 11c2 2 5 2 7 0" />
        </svg>
        <svg width="12" height="18" viewBox="0 0 12 18" fill="#1a72c8" className="ml-[5px]">
          <rect x="3" y="0" width="6" height="11" rx="3" />
          <path d="M1 7.500c0 3 2 5 5 5s5-2 5-5M6 12.500V17M3 17h6" fill="none" stroke="#1a72c8" strokeWidth="1.500" />
        </svg>
        <svg width="16" height="12" viewBox="0 0 16 12" className="ml-[6px]">
          <rect width="16" height="12" rx="1.500" fill="#1a72c8" />
          <path d="M2 3h12M2 6h12" stroke="#ffffff" strokeDasharray="1.500 1" />
          <path d="M4 9h8" stroke="#ffffff" />
        </svg>
        <div className="relative ml-[9px] w-[16px] h-[17px]">
          <svg width="14" height="17" viewBox="0 0 14 17" fill="#b7c8da">
            <circle cx="7" cy="4" r="3.500" />
            <path d="M1 14c0-4 3-6 6-6s6 2 6 6z" />
          </svg>
          <span className="absolute -right-[2px] bottom-0 text-[8px] font-bold leading-[8px] text-[#b7c8da] font-['Liberation_Sans',sans-serif]">24</span>
        </div>
        <svg width="15" height="15" viewBox="0 0 15 15" fill="#1a72c8" className="ml-[5px]">
          <path d="M4.500 0 7.500 2 10.500 0 15 3l-1.500 3.500-2-1V15h-8V5.500l-2 1L0 3z" />
        </svg>
        <svg width="15" height="15" viewBox="0 0 15 15" fill="none" stroke="#1a72c8" className="ml-[7px]">
          <path d="M1.500 13.500 8 7" strokeWidth="3.200" strokeLinecap="round" />
          <path d="M8.500 7.500a3.500 3.500 0 0 1 2-6.500L8.500 3l1 2.500L12 6.500 14 4a3.500 3.500 0 0 1-5.500 3.500z" fill="#1a72c8" />
        </svg>
      </div>
    </div>
  );
}

export default function App() {
  return (
    <div className="w-[1366px] h-[768px] overflow-hidden relative flex flex-col bg-[#2e2e2e] font-['Noto_Sans_CJK_SC','Liberation_Sans',sans-serif]">
      <TitleBar />
      <Toolbar />
      <div className="h-[627px] flex shrink-0 overflow-hidden relative">
        <Sidebar />
        <Splitter />
        <div className="flex-1 flex flex-col overflow-hidden">
          <Page />
          <div className="w-[840px] h-[12px] bg-white ml-[121px] mt-[5px] shrink-0" />
        </div>
        <div className="absolute right-[1px] top-[563px] w-[9px] h-[19px] rounded-[3px] bg-[#d0d0d0]" />
      </div>
      <StatusBar />
      <Taskbar />

      {/* floating over the window: badge and IME bar */}
      <div className="absolute left-[972px] -top-[28px] w-[46px] h-[46px] rounded-full bg-[#37b866] border border-[#b0b0b0] flex items-end justify-center pb-[2px] text-white text-[11px] font-bold font-['Liberation_Sans',sans-serif] leading-[14px] shadow-[0_1px_2px_rgba(0,0,0,0.6)]">
        78
      </div>
      <SogouBar />
    </div>
  );
}
